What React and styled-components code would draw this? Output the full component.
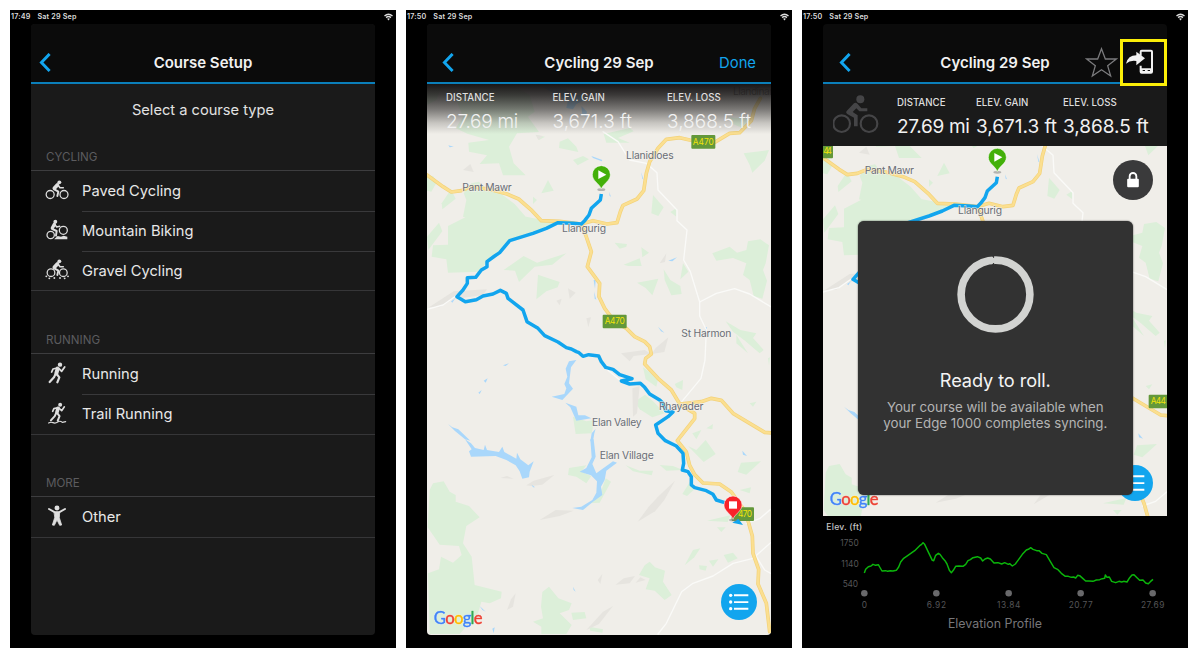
import React from "react";
import styled, { createGlobalStyle } from "styled-components";

const Global = createGlobalStyle`
  *, *::before, *::after { box-sizing: border-box; }
  body { margin: 0; background: #fff; font-family: Inter, "Liberation Sans", sans-serif; }
  svg { display: block; }
`;

const BLUE = "#12a5ee";

/* ---------- page frame ---------- */
const Page = styled.main`
  width: 1200px;
  height: 660px;
  padding: 10px;
  display: flex;
  gap: 10px;
  overflow: hidden;
`;
const Tablet = styled.section`
  width: 386px;
  height: 638px;
  background: #000;
  display: flex;
  flex-direction: column;
  align-items: center;
`;
const StatusBar = styled.div`
  width: 100%;
  height: 14px;
  padding: 0 3px 1px 1px;
  display: flex;
  align-items: center;
  gap: 7px;
  color: #dcdcdc;
  font-size: 7.2px;
  font-weight: 600;
  line-height: 12px;
  letter-spacing: 0.17px;
  svg { margin-left: auto; }
`;
const Screen = styled.div`
  position: relative;
  width: 344px;
  height: 610.5px;
  border-radius: 4px;
  overflow: hidden;
  display: flex;
  flex-direction: column;
  background: ${(p) => p.$bg || "#1a1a1a"};
`;
const Header = styled.header`
  flex: none;
  height: 60px;
  padding: 19px ${(p) => p.$right || 16}px 0 ${(p) => p.$left || 16}px;
  border-bottom: 2px solid #0b7fba;
  background: #0b0b0b;
  display: grid;
  grid-template-columns: 1fr auto 1fr;
  align-items: center;
`;
const Title = styled.h1`
  margin: 0;
  color: #f2f2f2;
  font-size: 15px;
  font-weight: 600;
  line-height: 20px;
  white-space: nowrap;
`;
const Done = styled.span`
  justify-self: end;
  color: ${BLUE};
  font-size: 14.8px;
`;

/* ---------- course list ---------- */
const Intro = styled.p`
  margin: 0;
  height: 52px;
  line-height: 52px;
  text-align: center;
  color: #e2e2e2;
  font-size: 14.65px;
`;
const Group = styled.div`
  display: flex;
  flex-direction: column;
  margin-top: ${(p) => (p.$first ? 0 : 27.6)}px;
`;
const GroupTitle = styled.h2`
  margin: 0;
  height: 34px;
  padding: 8px 0 0 15px;
  color: #5c5c5f;
  font-size: 11.6px;
  font-weight: 400;
  line-height: 27px;
`;
const Rows = styled.div`
  border-top: 1px solid #3d3d3f;
  border-bottom: 1px solid #363638;
`;
const Row = styled.div`
  display: flex;
  align-items: stretch;
  height: 39.8px;
  padding-left: 14px;
  & + & > span { border-top: 1px solid #39393b; line-height: 39px; }
  svg { align-self: center; flex: none; }
`;
const RowLabel = styled.span`
  flex: 1;
  margin-left: 13px;
  line-height: 41px;
  color: #e8e8e8;
  font-size: 14.7px;
`;

/* ---------- stats ---------- */
const FadeStats = styled.div`
  position: absolute;
  top: 60px;
  left: 0;
  right: 0;
  height: 50px;
  padding: 6px 0 0 19px;
  display: grid;
  grid-template-columns: 106.5px 114.5px 1fr;
  background: linear-gradient(#191617 0%, rgba(30, 28, 28, 0.86) 22%, rgba(60, 58, 57, 0.66) 50%, rgba(120, 118, 115, 0.34) 78%, rgba(240, 238, 234, 0) 100%);
`;
const SolidStats = styled.div`
  flex: none;
  height: 62px;
  padding-left: 9.5px;
  display: grid;
  grid-template-columns: 64.5px 79px 87px 1fr;
  background: #1a1a1a;
  svg { align-self: center; }
`;
const Stat = styled.div`
  display: flex;
  flex-direction: column;
  padding-top: ${(p) => p.$top || 0}px;
  white-space: nowrap;
  color: #f2f2f2;
  small { font-size: 9.7px; line-height: 16px; color: #dedede; font-weight: 500; }
  strong { font-size: 19px; line-height: 31px; font-weight: ${(p) => p.$weight || 400}; letter-spacing: ${(p) => p.$track || 0}px; }
`;

/* ---------- map ---------- */
const MapBox = styled.div`
  position: relative;
  flex: none;
  width: 344px;
  height: ${(p) => p.$h}px;
  background: #f0eee9;
  overflow: hidden;
`;
const RoundButton = styled.div`
  position: absolute;
  right: ${(p) => p.$right}px;
  bottom: ${(p) => p.$bottom}px;
  width: ${(p) => p.$size}px;
  height: ${(p) => p.$size}px;
  border-radius: 50%;
  background: ${(p) => p.$bg};
  display: grid;
  place-items: center;
`;
const Modal = styled.div`
  position: absolute;
  left: 35px;
  top: 75px;
  width: 274.5px;
  height: 274px;
  border-radius: 6px;
  background: #323232;
  box-shadow: 0 0 1.5px #222;
  display: flex;
  flex-direction: column;
  align-items: center;
  padding-top: 35px;
  text-align: center;
  h3 { margin: 34px 0 6px; font-size: 18.2px; line-height: 26px; font-weight: 400; color: #f4f4f4; letter-spacing: -0.1px; }
  p { margin: 0; font-size: 13.3px; line-height: 16.2px; color: #b4b4b4; white-space: nowrap; }
`;
const HeaderActions = styled.div`
  justify-self: end;
  display: flex;
  align-items: center;
  margin-right: 33px;
  svg { flex: none; }
`;
const Highlight = styled.div`
  position: absolute;
  top: 15px;
  right: 0.5px;
  width: 46.5px;
  height: 47px;
  padding: 0 7px 2px 0;
  border: 3px solid #fbee08;
  background: #0b0b0b;
  display: grid;
  place-items: center;
`;
const Profile = styled.div`
  width: 344px;
  display: flex;
  flex-direction: column;
  align-items: center;
`;
const Caption = styled.div`
  color: #77777a;
  font-size: 12.4px;
  line-height: 18px;
`;

/* ---------- icons ---------- */
const Wifi = () => (
  <svg width="9" height="8" viewBox="0 0 18 16" fill="none" stroke="#dcdcdc" strokeWidth="2.8">
    <path d="M1 6 Q9 -1 17 6" />
    <path d="M4.2 9.2 Q9 5 13.8 9.2" />
    <path d="M9 15 L6.2 11.6 Q9 9.6 11.8 11.6 Z" fill="#dcdcdc" stroke="none" />
  </svg>
);
const Back = () => (
  <svg width="12" height="20" viewBox="0 0.5 12 20" fill="none" stroke={BLUE} strokeWidth="2.9">
    <path d="M10.6 1.4 L2.4 10 L10.6 18.6" />
  </svg>
);
const Glyph = ({ children }) => (
  <svg width="24" height="24" viewBox="0 0 72 72" fill="none" stroke="#dedede" strokeWidth="3.8" strokeLinecap="round" strokeLinejoin="round">
    {children}
  </svg>
);
const Rider = () => (
  <>
    <circle cx="43" cy="10" r="5.8" fill="#dedede" stroke="none" />
    <path d="M37 18 L28 28" strokeWidth="11" />
    <path d="M39 18 L45 26 L55 26" strokeWidth="4.6" />
    <path d="M28 31 L40 38 L37 51" strokeWidth="5.8" />
  </>
);
const Paved = () => (
  <Glyph>
    <circle cx="15.5" cy="46.5" r="12" />
    <circle cx="57" cy="46.5" r="12" />
    <Rider />
  </Glyph>
);
const Mountain = () => (
  <Glyph>
    <circle cx="17" cy="48" r="11" />
    <circle cx="55" cy="34" r="12" />
    <circle cx="31" cy="8" r="5.8" fill="#dedede" stroke="none" />
    <path d="M28 16 L22 27" strokeWidth="10" />
    <path d="M30 17 L35 24 L44 22" strokeWidth="4.6" />
    <path d="M22 30 L35 36 L33 50" strokeWidth="5.8" />
    <path d="M28 60 L38 51 L48 53 L56 50 L67 53 L67 61 L28 61 Z" fill="#dedede" stroke="none" />
  </Glyph>
);
const Gravel = () => (
  <Glyph>
    <circle cx="18" cy="44" r="11.5" />
    <circle cx="55" cy="44" r="11.5" />
    <Rider />
    <g fill="#dedede" stroke="none">
      <circle cx="4" cy="55" r="2.8" />
      <circle cx="13" cy="61" r="2.8" />
      <circle cx="28" cy="60" r="2.8" />
      <circle cx="45" cy="60" r="2.8" />
      <circle cx="59" cy="61" r="2.8" />
      <circle cx="69" cy="55" r="2.8" />
    </g>
  </Glyph>
);
const Runner = () => (
  <>
    <circle cx="45" cy="8" r="6.6" fill="#dedede" stroke="none" />
    <path d="M38 20 L34 34" strokeWidth="12" />
    <path d="M36 18 L24 21 L20 30" strokeWidth="5.4" />
    <path d="M42 20 L50 28 L59 15" strokeWidth="5.4" />
    <path d="M31 37 L27 46 L14 60" strokeWidth="6.6" />
    <path d="M35 36 L43 46 L37 61" strokeWidth="6.6" />
  </>
);
const Run = () => (
  <Glyph>
    <Runner />
  </Glyph>
);
const Trail = () => (
  <Glyph>
    <g transform="translate(5 1) scale(.9)">
      <Runner />
    </g>
    <path d="M11 63 Q17 59 24 62 T38 60 T52 61 L62 59" strokeWidth="3.6" />
  </Glyph>
);
const Other = () => (
  <Glyph>
    <circle cx="36" cy="9" r="7.4" fill="#dedede" stroke="none" />
    <path d="M12 12 L30 22 H42 L60 12" strokeWidth="6" />
    <path d="M28 22 H44 L43 38 L50 60 L44 61 L36 45 L28 61 L22 60 L29 38 Z" fill="#dedede" strokeWidth="2.4" />
  </Glyph>
);
const DimRider = () => (
  <svg width="48" height="42" viewBox="3 0 144 126" fill="none" stroke="#454547" strokeWidth="6.5" strokeLinejoin="round">
    <circle cx="29" cy="89" r="25" />
    <circle cx="111" cy="89" r="25" />
    <circle cx="85" cy="16" r="12" fill="#454547" stroke="none" />
    <path d="M66 28 L44 51 Q40 57 47 61 L66 71 V97 H77 V64 L62 54 L73 43 L82 52 H106 V43 H88 L77 30 Q71 24 66 28 Z" fill="#454547" stroke="none" />
  </svg>
);
const ListIcon = () => (
  <svg width="20" height="18" viewBox="0 0 60 54" fill="#fff">
    <circle cx="5" cy="7" r="5" />
    <circle cx="5" cy="27" r="5" />
    <circle cx="5" cy="47" r="5" />
    <path d="M15 4 H58 V9.5 H15 Z M15 24.5 H58 V30 H15 Z M15 44.5 H58 V50 H15 Z" />
  </svg>
);
const Lock = () => (
  <svg width="12" height="16" viewBox="0 0 36 48">
    <path d="M8 22 V13 a10 10 0 0 1 20 0 V22" fill="none" stroke="#fff" strokeWidth="5.5" />
    <rect x="0.5" y="20" width="35" height="26" rx="3" fill="#fff" />
  </svg>
);
const Star = () => (
  <svg width="33" height="31" viewBox="0 0 99 93" fill="none" stroke="#7b7b7d" strokeWidth="3.8">
    <path d="M49.5 5 L61 36 H94 L68 56 L77 87 L49.5 68 L22 87 L31 56 L5 36 H38 Z" />
  </svg>
);
const SendToDevice = () => (
  <svg width="28" height="26" viewBox="0 0 84 78">
    <path d="M44 20 V8 Q44 5 47 5 H75 Q78 5 78 8 V68 Q78 71 75 71 H47 Q44 71 44 68 V50" fill="none" stroke="#f2f2f2" strokeWidth="6" />
    <path d="M44 58 H78 V71 H44 Z" fill="#f2f2f2" />
    <path d="M50 63 H57 V66 H50 Z M65 63 H72 V66 H65 Z" fill="#111" />
    <path d="M0 44 Q6 19 31 19 V8 L57 28 L31 49 V36 Q12 33 0 44 Z" fill="#f2f2f2" />
  </svg>
);
const Ring = () => (
  <svg width="77" height="77" viewBox="0 0 77 77">
    <circle cx="38.5" cy="38.5" r="34.4" fill="none" stroke="#d2d3d1" strokeWidth="7.6" />
    <path d="M35.3 -1 L36.6 1.6 L36.2 -1 Z M35.6 8.6 L36.6 7.2 L37 8.6 Z" fill="#323232" stroke="#323232" strokeWidth="1" />
  </svg>
);

/* ---------- map artwork: three stacked tiles sharing one coordinate grid ---------- */
const TILE_TOP = { north: 0, mid: 660, south: 1320 };

const WOODS = {
  north: [
    "170,300 200,250 330,250 390,285 405,335 385,350 418,396 352,400 328,440 342,490 378,526 310,526 298,490 240,492 262,466 208,455 206,428 268,420 205,402 168,385 190,350",
    "82,250 130,250 110,300 82,315",
    "480,425 505,415 530,440 536,456 478,444", "520,480 550,468 568,478 534,496", "612,402 690,384 702,394 655,414 690,428 620,428",
    "408,404 436,410 418,420", "1032,460 1108,450 1095,482 1058,518 1050,495", "985,352 1050,356 1030,385 1000,372", "445,540 462,572 425,580",
    "82,530 100,528 112,545 95,575 82,572", "126,610 154,568 168,596 128,628", "215,550 238,545 258,568 300,578 345,612 378,650 372,664 240,664 190,650 200,600 192,580",
    "760,585 792,622 776,648 755,640", "812,636 830,625 830,650", "400,590 412,600 400,612"
  ],
  mid: [
    "145,18 200,-10 380,-10 470,8 440,28 330,62 298,98 262,124 240,155 145,158 140,118 96,110 100,76 145,74",
    "82,50 118,8 128,34 86,90", "312,150 372,108 412,128 500,100 458,134 405,140 358,186 346,152", "415,164 480,186 474,202 440,214 410,238",
    "645,68 682,72 680,80 660,86", "725,82 748,98 728,112", "672,134 720,115 726,138 686,138", "712,188 776,176 758,226 738,204",
    "792,148 812,180 842,198 846,222 815,226 795,180", "850,130 866,155 842,178",
    "938,100 990,80 1012,98 1040,90 1045,64 1082,58 1108,76 1098,130 1090,150 1102,182 1088,236 1062,228 1050,180 1030,165 1040,130 1000,114 950,122",
    "978,304 1022,330 1070,340 1060,354 1092,390 1080,400 1036,362 1000,335", "1010,345 1045,400 1010,370",
    "730,442 776,475 770,500 738,478", "825,492 850,480 848,510 830,502", "705,545 736,524 762,545 795,580 758,592 720,568",
    "520,590 560,604 584,600 576,640 528,642", "878,640 905,630 890,658", "920,625 940,612 938,628", "1050,550 1070,545 1060,560", "1105,415 1111,412 1108,436"
  ],
  south: [
    "100,130 132,124 150,155 168,165 168,185 208,198 240,232 200,258 190,310 216,350 225,435 306,455 304,475 270,490 245,485 235,520 180,582 90,582 85,400 118,388 124,350 160,368 186,345 178,318 120,314 84,262 90,150",
    "508,84 560,76 545,95 575,108 560,130 530,110 505,105", "618,115 634,125 600,188 568,190 600,165",
    "428,456 448,440 476,475 516,490 508,510 480,520 516,555 500,582 425,582 425,560 400,545 430,535 424,500",
    "718,405 735,376 750,365 766,382 796,392 790,425 816,465 795,480 765,452 738,448 750,415",
    "880,330 902,325 884,352 855,376", "898,376 922,378 918,392 900,388", "928,362 956,358 940,380", "972,345 1000,338 1014,355 985,368",
    "515,518 555,516 560,535 520,540", "865,18 890,30 918,0 948,42 912,66", "1024,68 1084,64 1040,104 1014,96", "874,120 882,150 862,168 848,162",
    "678,76 720,92 760,92 756,106 700,94", "780,75 820,78 850,90 800,92", "922,242 992,226 984,246", "952,262 978,262 965,276", "568,560 610,568 608,578 572,572", "1020,150 1054,142 1050,160"
  ]
};
const HILLS = {
  north: ["190,510 212,492 222,516", "408,405 430,408 416,420"],
  mid: [
    "88,262 162,214 262,208 250,225 160,238 120,262", "470,242 486,236 480,256", "505,205 528,218 510,236", "664,400 735,390 755,402 702,408 690,424",
    "768,384 806,352 794,396 756,402", "698,505 720,498 712,580 700,590", "560,295 574,292 566,322", "780,130 800,100 796,126"
  ],
  south: [
    "302,114 322,108 342,116", "380,136 402,122 464,105 428,134 394,138", "420,240 468,210 522,212 480,228", "714,245 746,202 775,170 826,122 794,180 766,214",
    "594,420 608,402 602,432", "648,434 672,415 706,408 690,430", "708,428 722,412 738,420", "322,510 334,478 348,460 340,500", "560,570 610,515 640,498 598,552"
  ]
};
const WATER = {
  north: ["430,262 470,262 500,268 515,282 550,288 556,300 530,312 520,328 500,324 505,300 480,290", "545,318 562,335 558,350 548,345", "146,436 162,440 150,442", "575,468 608,480 606,484 580,474", "724,515 732,540 728,536", "628,575 634,590 630,588"],
  mid: [
    "530,420 508,424 498,446 503,470 494,492 500,505 494,522 456,530 488,540 520,506 508,490 514,442", "497,548 512,562 530,602 575,595 556,586 536,586 530,560",
    "145,612 158,622 176,628 212,662 196,658 165,632", "588,626 584,640 580,664 572,664 576,640", "310,436 328,430 318,438", "252,482 264,475 258,488", "236,518 246,510 240,522", "806,122 832,112 818,124",
    "775,320 794,338 784,334", "916,322 922,322 918,336", "582,180 588,180 586,206", "583,214 590,240 585,235", "154,244 166,236 158,248"
  ],
  south: [
    "196,-2 214,10 226,24 252,30 256,14 262,30 298,36 308,20 314,36 350,56 352,38 362,58 386,76 402,64 390,95 388,112 368,116 360,94 348,76 320,60 288,48 214,50 208,34 216,28",
    "572,-2 582,-2 588,50 578,72 590,100 640,64 652,68 620,92 615,120 604,140 608,165 580,185 550,210 518,204 545,200 578,180 590,158 592,124 574,106 540,95 560,84 576,52",
    "520,440 528,455 522,450", "1028,32 1042,48 1030,44", "278,566 285,562 282,580", "240,498 258,515 248,510", "396,134 406,142 400,142"
  ]
};
const LANES = [
  "M610,395 L655,425 L690,480 L740,490 L772,518 L775,570 L832,630 L832,662 L862,690 L852,780 L872,815 L900,906 L900,948 L920,990 L916,1080 L904,1135 L842,1210",
  "M900,906 L950,880 L1005,866 L1050,882 L1113,920",
  "M82,928 L130,915 L180,880",
  "M610,1098 L660,1140",
  "M1113,1528 L1080,1556 L1040,1570",
  "M1113,1628 L1060,1675 L1000,1690 L940,1728 L880,1750 L846,1775 L800,1870 L775,1902",
  "M1070,1670 L1095,1710 L1113,1720"
];
const ROADS = [
  "M82,525 L130,560 L155,576 L185,572 L215,560 L270,568 L322,582 L357,597 L397,632 L425,662 L480,664 L545,672 L580,662 L622,672 L652,668 L662,635 L670,616 L712,597 L732,572 L740,520 L750,485 L775,445 L800,418 L840,413 L870,420 L940,430 L990,400 L1020,398 L1055,362 L1065,325 L1082,295",
  "M545,672 L558,705 L575,755 L563,800 L600,850 L598,890 L615,925 L645,965 L680,985 L705,1010 L735,1025 L750,1040 L755,1062 L738,1075 L735,1092 L775,1135 L815,1170 L842,1215 L885,1240 L885,1256 L833,1322 L860,1356 L870,1396 L885,1424 L910,1449 L960,1452 L995,1476 L1030,1525 L1045,1562 L1058,1608 L1060,1660 L1077,1708 L1075,1752 L1100,1810 L1110,1895",
  "M842,1212 L905,1205 L935,1195 L965,1201 L1000,1240 L1050,1270 L1095,1297 L1116,1299"
];
const ROUTE =
  "M605,582 L602,600 L575,625 L568,645 L555,662 L545,672 L520,670 L475,668 L440,685 L400,700 L330,722 L300,758 L285,768 L262,785 L262,800 L245,810 L228,832 L203,833 L203,850 L190,870 L172,890 L197,905 L230,899 L250,888 L280,882 L302,871 L320,880 L325,895 L370,930 L382,965 L415,985 L435,1007 L475,1026 L500,1043 L515,1047 L530,1055 L538,1058 L550,1069 L567,1064 L597,1068 L605,1085 L618,1102 L640,1108 L660,1124 L697,1136 L665,1143 L690,1152 L722,1150 L735,1162 L750,1182 L780,1200 L790,1210 L798,1232 L820,1236 L805,1250 L768,1275 L775,1300 L797,1322 L830,1338 L850,1360 L852,1390 L848,1410 L865,1415 L875,1430 L875,1455 L885,1463 L920,1472 L940,1483 L950,1500 L985,1511";

const Polys = ({ set, fill }) =>
  Object.entries(set).map(([tile, shapes]) => (
    <g key={tile} transform={`translate(0 ${TILE_TOP[tile]})`} fill={fill}>
      {shapes.map((s) => (
        <polygon key={s} points={s} />
      ))}
    </g>
  ));
const Shield = ({ x, y, w = 72, label, tx, tl }) => (
  <g>
    <rect x={x} y={y} width={w} height="41" rx="3" fill="#63983a" />
    <text x={tx ?? x + w / 2} y={y + 29} fontSize="25" fill="#f0e20a" textAnchor="middle" textLength={tl}>{label}</text>
  </g>
);
const Place = ({ x, y, len, children, fill = "#6a6e76" }) => (
  <text x={x} y={y} fontSize="31" textLength={len} fill={fill} stroke="#f4f2ee" strokeWidth="4" paintOrder="stroke" strokeOpacity=".7">{children}</text>
);
const Pin = ({ x, y, fill, children }) => (
  <g transform={`translate(${x} ${y})`}>
    <ellipse cx="0" cy="2" rx="12" ry="4" fill="#777" opacity=".5" />
    <path d="M0 0 C-5 -16 -27 -24 -27 -43 A27 27 0 0 1 27 -43 C27 -24 5 -16 0 0 Z" fill={fill} stroke="#fff" strokeWidth="1.6" />
    {children}
  </g>
);
const Finish = () => (
  <>
    <Shield x={996} y={1522} w={67} label="470" tx={1036} tl={42} />
    <path d="M998 1568 L1016 1556 L1030 1575 Z" fill={BLUE} />
    <Pin x={1000} y={1558} fill="#f8232a">
      <rect x="-12" y="-54" width="24" height="22" fill="#fff" />
    </Pin>
  </>
);
const CourseMap = ({ top, height, pantX, children }) => (
  <svg width="344" height={height} viewBox={`82 ${top} 1032 ${height * 3}`} fontFamily="Inter, sans-serif">
    <Polys set={WOODS} fill="#dcefd9" />
    <Polys set={HILLS} fill="#e6e4df" />
    <Polys set={WATER} fill="#a9d7fb" />
    <g fill="none" strokeLinejoin="round" strokeLinecap="round">
      {LANES.map((d) => <path key={d} d={d} stroke="#fafaf8" strokeWidth="4" />)}
      {ROADS.map((d) => <path key={d} d={d} stroke="#f3d27a" strokeWidth="11" />)}
      {ROADS.map((d) => <path key={d} d={d} stroke="#fbdf90" strokeWidth="7" />)}
    </g>
    <Place x={pantX} y={574} len={148}>Pant Mawr</Place>
    <path d={ROUTE} fill="none" stroke={BLUE} strokeWidth="10.5" strokeLinejoin="round" />
    <Place x={487} y={695} len={132}>Llangurig</Place>
    <Pin x={605} y={567} fill="#43b009">
      <path d="M-9 -56 L15 -43 L-9 -30 Z" fill="#fff" />
    </Pin>
    {children}
  </svg>
);
const RegionLabels = () => (
  <>
    <Shield x={875} y={405} label="A470" tl={63} />
    <Shield x={609} y={944} label="A470" tl={60} />
    <Place x={1000} y={286} len={136} fill="#7b7873">Llandinam</Place>
    <Place x={679} y={476} len={143}>Llanidloes</Place>
    <Place x={845} y={1011} len={150}>St Harmon</Place>
    <Place x={778} y={1229} len={133}>Rhayader</Place>
    <Place x={577} y={1279} len={149}>Elan Valley</Place>
    <Place x={600} y={1376} len={162}>Elan Village</Place>
  </>
);
const Google = styled.text`
  font-family: Lato, sans-serif;
  font-size: 50px;
  stroke-width: 1.4px;
  filter: drop-shadow(0 0 2px #fff) drop-shadow(0 0 2px #fff);
`;
const GOOGLE = [["G", "#4285f4"], ["o", "#ea4335"], ["o", "#fbbc05"], ["g", "#4285f4"], ["l", "#34a853"], ["e", "#ea4335"]];
const GoogleMark = ({ x, y }) => (
  <Google x={x} y={y} textLength="147">
    {GOOGLE.map(([c, color], i) => (
      <tspan key={i} fill={color} stroke={color}>{c}</tspan>
    ))}
  </Google>
);

/* ---------- elevation chart ---------- */
const PROFILE =
  "194,278 198,267 206,259 214,257 220,252 228,255 236,253 240,260 247,272 258,271 264,273 272,271 280,272 290,270 297,260 303,245 312,234 325,225 345,211 360,196 366,192 370,187 375,192 385,213 398,240 402,241 408,225 416,219 421,222 428,232 436,241 442,251 449,270 455,277 461,270 468,258 478,257 490,258 498,252 505,241 512,238 520,232 533,229 543,233 549,242 556,236 564,233 572,236 583,248 595,247 606,251 615,247 626,252 630,250 638,257 647,251 655,240 668,222 680,209 688,206 693,202 700,207 711,211 718,211 727,219 740,223 750,240 763,262 775,268 785,279 797,288 806,288 815,291 822,290 828,293 834,285 840,286 850,295 858,302 868,302 880,303 890,299 900,298 908,295 915,294 917,284 922,291 929,290 936,303 948,307 958,303 966,305 972,303 982,305 990,292 997,284 1003,283 1012,292 1020,300 1030,299 1038,308 1046,310 1052,304 1060,297";
const TICKS = [[194, "0", 14], [410, "6.92", 58], [627, "13.84", 70], [843, "20.77", 72], [1059, "27.69", 70]];

const Chart = () => (
  <svg width="344" height="99" viewBox="70 107 1032 297" fontFamily="Inter, sans-serif" fontSize="25">
    <text x="80" y="150" fontSize="26" textLength="108" fontWeight="500" fill="#c6c6c6">Elev. (ft)</text>
    <g fill="#555557" textAnchor="end">
      <text x="177" y="197" textLength="55">1750</text>
      <text x="177" y="259" textLength="52">1140</text>
      <text x="175" y="321" textLength="46">540</text>
    </g>
    <polyline points={PROFILE} fill="none" stroke="#0bb50b" strokeWidth="4.4" strokeLinejoin="round" />
    {TICKS.map(([x, label, len]) => (
      <g key={label}>
        <circle cx={x} cy="339" r="9.8" fill="#69696b" />
        <text x={x} y="384" textAnchor="middle" textLength={len} fill="#555557">{label}</text>
      </g>
    ))}
  </svg>
);

const Status = ({ time }) => (
  <StatusBar>
    <span>{time}</span>
    <span>Sat 29 Sep</span>
    <Wifi />
  </StatusBar>
);

const GROUPS = [
  { title: "CYCLING", rows: [["Paved Cycling", Paved], ["Mountain Biking", Mountain], ["Gravel Cycling", Gravel]] },
  { title: "RUNNING", rows: [["Running", Run], ["Trail Running", Trail]] },
  { title: "MORE", rows: [["Other", Other]] }
];
const STATS = [["DISTANCE", "27.69 mi", -0.25], ["ELEV. GAIN", "3,671.3 ft", 0.05], ["ELEV. LOSS", "3,868.5 ft", 0.05]];

export default function App() {
  return (
    <>
      <Global />
      <Page>
        <Tablet>
          <Status time="17:49" />
          <Screen>
            <Header $left={8} $right={8}>
              <Back />
              <Title>Course Setup</Title>
            </Header>
            <Intro>Select a course type</Intro>
            {GROUPS.map((g, i) => (
              <Group key={g.title} $first={i === 0}>
                <GroupTitle>{g.title}</GroupTitle>
                <Rows>
                  {g.rows.map(([label, Icon]) => (
                    <Row key={label}>
                      <Icon />
                      <RowLabel>{label}</RowLabel>
                    </Row>
                  ))}
                </Rows>
              </Group>
            ))}
          </Screen>
        </Tablet>

        <Tablet>
          <Status time="17:50" />
          <Screen>
            <Header $left={15} $right={15}>
              <Back />
              <Title>Cycling 29 Sep</Title>
              <Done>Done</Done>
            </Header>
            <MapBox $h={550.5}>
              <CourseMap top={252} height={550.5} pantX={188}>
                <RegionLabels />
                <Finish />
                <GoogleMark x={102} y={1872} />
              </CourseMap>
              <RoundButton $size={36} $right={14.5} $bottom={14.5} $bg={BLUE}>
                <ListIcon />
              </RoundButton>
            </MapBox>
            <FadeStats>
              {STATS.map(([k, v, track]) => (
                <Stat key={k} $weight={300} $track={track}>
                  <small>{k}</small>
                  <strong>{v}</strong>
                </Stat>
              ))}
            </FadeStats>
          </Screen>
        </Tablet>

        <Tablet>
          <Status time="17:50" />
          <Screen $bg="#000">
            <Header $left={16} $right={16}>
              <Back />
              <Title>Cycling 29 Sep</Title>
              <HeaderActions>
                <Star />
              </HeaderActions>
            </Header>
            <Highlight>
              <SendToDevice />
            </Highlight>
            <SolidStats>
              <DimRider />
              {STATS.map(([k, v, track]) => (
                <Stat key={k} $top={11} $track={track - 0.07}>
                  <small>{k}</small>
                  <strong>{v}</strong>
                </Stat>
              ))}
            </SolidStats>
            <MapBox $h={369.5}>
              <CourseMap top={490} height={369.5} pantX={207}>
                <Shield x={60} y={486} w={52} label="44" tx={96} tl={26} />
                <Shield x={1059} y={1236} w={60} label="A44" tx={1088} tl={46} />
                <GoogleMark x={102} y={1567} />
              </CourseMap>
              <RoundButton $size={40} $right={14} $bottom={315.5} $bg="#3a3a3b">
                <Lock />
              </RoundButton>
              <RoundButton $size={36} $right={14.5} $bottom={14.5} $bg={BLUE}>
                <ListIcon />
              </RoundButton>
              <Modal>
                <Ring />
                <h3>Ready to roll.</h3>
                <p>Your course will be available when<br />your Edge 1000 completes syncing.</p>
              </Modal>
            </MapBox>
            <Profile>
              <Chart />
              <Caption>Elevation Profile</Caption>
            </Profile>
          </Screen>
        </Tablet>
      </Page>
    </>
  );
}
